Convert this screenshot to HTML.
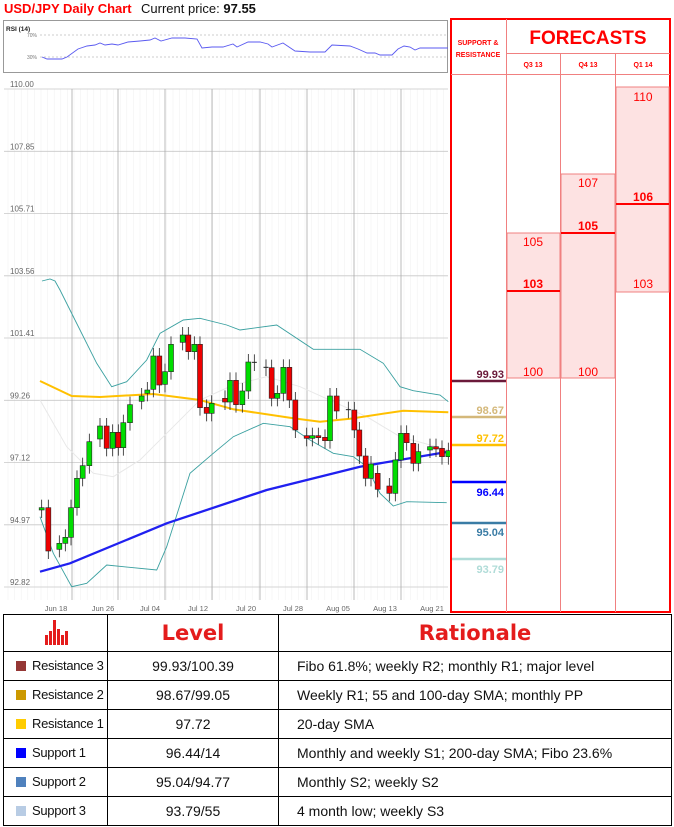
<!DOCTYPE html>
<html><head><meta charset="utf-8"><style>
*{margin:0;padding:0;box-sizing:border-box}
body{width:674px;height:827px;background:#fff;position:relative;overflow:hidden;font-family:"Liberation Sans",sans-serif}
.abs{position:absolute}
table{border-collapse:collapse;position:absolute;left:3px;top:614px;width:669px;table-layout:fixed}
td{border:1px solid #000;height:29px;font-size:14px;color:#111;white-space:nowrap;line-height:14px;padding:0;overflow:hidden}
td.c{text-align:center}
td.n{padding-left:12px;font-size:13px;letter-spacing:-0.3px}
td.r{padding-left:18px}
.sq{display:inline-block;width:10px;height:10px;margin-right:6px;vertical-align:-1px}
th{border:1px solid #000;height:37px;color:#e41c1c;font-size:21px;font-weight:bold;font-family:"DejaVu Sans","Liberation Sans",sans-serif;padding:0;line-height:20px}
</style></head><body>
<div class="abs" style="left:4px;top:1px;font-size:13px;font-weight:bold;color:#f00;white-space:nowrap">USD/JPY Daily Chart</div>
<div class="abs" style="left:141px;top:1px;font-size:13px;color:#111;white-space:nowrap">Current price: <b>97.55</b></div>

<svg class="abs" style="left:0;top:0" width="674" height="614" xmlns="http://www.w3.org/2000/svg" id="s">
<rect x="3.5" y="20.5" width="444" height="52" fill="#fff" stroke="#999"/>
<text x="6" y="31" font-size="6.5" font-weight="bold" fill="#222">RSI (14)</text>
<line x1="40" y1="35" x2="446" y2="35" stroke="#999" stroke-dasharray="2,2" stroke-width="0.6"/>
<line x1="40" y1="57" x2="446" y2="57" stroke="#999" stroke-dasharray="2,2" stroke-width="0.6"/>
<text x="27" y="37" font-size="5" fill="#777">70%</text>
<text x="27" y="59" font-size="5" fill="#777">30%</text>
<polyline fill="none" stroke="#5a5af0" stroke-width="0.9" points="42,57 47,59 62,59 67,57 78,49 87,46 95,45 100,43 105,45 112,44 118,45 128,42 140,41 150,40 155,38 161,41 172,38 185,38 197,39 202,48 212,47 223,47 233,44 237,47 248,42 260,42 268,44 272,47 283,43 295,51 310,52 325,52 332,45 350,46 358,49 367,53 375,53 380,55 392,55 398,49 404,46 410,47 415,50 420,48 435,48 448,48"/>
<rect x="4" y="89" width="444" height="512" fill="#fff"/>
<g id="g"></g>
<rect x="451" y="19" width="219" height="593" fill="none" stroke="#f00" stroke-width="2"/>
<g stroke="#f08080" stroke-width="1" fill="none">
<line x1="506.5" y1="19" x2="506.5" y2="612"/><line x1="560.5" y1="53" x2="560.5" y2="612"/><line x1="615.5" y1="53" x2="615.5" y2="612"/>
<line x1="506" y1="53.5" x2="670" y2="53.5"/><line x1="451" y1="74.5" x2="670" y2="74.5"/>
</g>
<rect x="507" y="233" width="53" height="145" fill="#fde2e2" stroke="#f08080"/>
<rect x="561" y="174" width="54" height="204" fill="#fde2e2" stroke="#f08080"/>
<rect x="616" y="87" width="53" height="205" fill="#fde2e2" stroke="#f08080"/>
<line x1="507" y1="291" x2="560" y2="291" stroke="#f00" stroke-width="2"/>
<line x1="561" y1="233" x2="615" y2="233" stroke="#f00" stroke-width="2"/>
<line x1="616" y1="204" x2="669" y2="204" stroke="#f00" stroke-width="2"/>
<g font-size="12" fill="#f00" text-anchor="middle">
<text x="533" y="246">105</text><text x="533" y="288" font-weight="bold">103</text><text x="533" y="376">100</text>
<text x="588" y="187">107</text><text x="588" y="230" font-weight="bold">105</text><text x="588" y="376">100</text>
<text x="643" y="101">110</text><text x="643" y="201" font-weight="bold">106</text><text x="643" y="288">103</text>
</g>
<text x="588" y="44" font-size="19" font-weight="bold" fill="#f00" text-anchor="middle">FORECASTS</text>
<text x="478" y="45" font-size="7" font-weight="bold" fill="#f00" text-anchor="middle">SUPPORT &amp;</text>
<text x="478" y="57" font-size="7" font-weight="bold" fill="#f00" text-anchor="middle">RESISTANCE</text>
<g font-size="7" font-weight="bold" fill="#f00" text-anchor="middle"><text x="533" y="67">Q3 13</text><text x="588" y="67">Q4 13</text><text x="643" y="67">Q1 14</text></g>
<g stroke-width="2.5">
<line x1="452" y1="381" x2="506" y2="381" stroke="#6b1a3a"/>
<line x1="452" y1="417" x2="506" y2="417" stroke="#d4b87a"/>
<line x1="452" y1="445" x2="506" y2="445" stroke="#ffc000"/>
<line x1="452" y1="482" x2="506" y2="482" stroke="#0000ff"/>
<line x1="452" y1="523" x2="506" y2="523" stroke="#3a7ca5"/>
<line x1="452" y1="559" x2="506" y2="559" stroke="#b0dcd8"/>
</g>
<g font-size="11" font-weight="bold" text-anchor="end">
<text x="504" y="378" fill="#6b1a3a">99.93</text>
<text x="504" y="414" fill="#d4b87a">98.67</text>
<text x="504" y="442" fill="#ffc000">97.72</text>
<text x="504" y="496" fill="#0000ff">96.44</text>
<text x="504" y="536" fill="#3a7ca5">95.04</text>
<text x="504" y="573" fill="#b0dcd8">93.79</text>
</g>
</svg>

<table>
<colgroup><col style="width:104px"><col style="width:171px"><col></colgroup>
<tr><th><svg width="24" height="26" viewBox="0 0 24 26"><g fill="#e41c1c"><rect x="1" y="16" width="3" height="10"/><rect x="5" y="12" width="3" height="14"/><rect x="9" y="1" width="3" height="25"/><rect x="13" y="10" width="3" height="16"/><rect x="17" y="16" width="3" height="10"/><rect x="21" y="12" width="3" height="14"/></g></svg></th><th>Level</th><th>Rationale</th></tr>
<tr><td class="n"><span class="sq" style="background:#953735"></span>Resistance 3</td><td class="c">99.93/100.39</td><td class="r">Fibo 61.8%; weekly R2; monthly R1; major level</td></tr>
<tr><td class="n"><span class="sq" style="background:#cc9900"></span>Resistance 2</td><td class="c">98.67/99.05</td><td class="r">Weekly R1; 55 and 100-day SMA; monthly PP</td></tr>
<tr><td class="n"><span class="sq" style="background:#ffcc00"></span>Resistance 1</td><td class="c">97.72</td><td class="r">20-day SMA</td></tr>
<tr><td class="n"><span class="sq" style="background:#0000ff"></span>Support 1</td><td class="c">96.44/14</td><td class="r">Monthly and weekly S1; 200-day SMA; Fibo 23.6%</td></tr>
<tr><td class="n"><span class="sq" style="background:#4f81bd"></span>Support 2</td><td class="c">95.04/94.77</td><td class="r">Monthly S2; weekly S2</td></tr>
<tr><td class="n"><span class="sq" style="background:#b8cce4"></span>Support 3</td><td class="c">93.79/55</td><td class="r">4 month low; weekly S3</td></tr>
</table>

<script>
var g=document.getElementById('g'),h='';
function Z(x,y){return [(x/3).toFixed(1),(320+y/3).toFixed(1)];}
for(var x=8;x<448;x+=6.6)h+='<line x1="'+x+'" y1="89" x2="'+x+'" y2="600" stroke="#f2f2f2" stroke-width="0.6"/>';
var ys=[89,151.3,213.5,275.8,338,400.3,462.5,524.8,587],lb=['110.00','107.85','105.71','103.56','101.41','99.26','97.12','94.97','92.82'];
for(var i=0;i<9;i++){h+='<line x1="4" y1="'+ys[i]+'" x2="448" y2="'+ys[i]+'" stroke="#c8c8c8" stroke-width="0.8"/>';h+='<text x="10" y="'+(ys[i]-2)+'" font-size="8" fill="#666">'+lb[i]+'</text>';}
var vx=[72,118,165,212,260,307,354,401];
vx.forEach(function(x){h+='<line x1="'+x+'" y1="89" x2="'+x+'" y2="600" stroke="#aaa" stroke-width="0.8"/>';});
var dl=[['Jun 18',56],['Jun 26',103],['Jul 04',150],['Jul 12',198],['Jul 20',246],['Jul 28',293],['Aug 05',338],['Aug 13',385],['Aug 21',432]];
dl.forEach(function(d){h+='<text x="'+d[1]+'" y="611" font-size="7.5" fill="#666" text-anchor="middle">'+d[0]+'</text>';});
function pl(pts,col,w,full){var s=pts.map(function(p){return full?p.join(','):Z(p[0],p[1]).join(',');}).join(' ');return '<polyline fill="none" stroke="'+col+'" stroke-width="'+w+'" points="'+s+'"/>';}
h+=pl([[120,240],[200,380],[280,460],[340,470],[420,420],[520,320],[600,240],[700,195],[800,170],[900,200],[1000,245],[1100,290],[1200,350],[1345,390]],'#e8e8e8',1);
h+=pl([[42,281],[50,279],[55,281],[60,290],[75,320]],'#3aa0a0',0.9,true);
h+=pl([[225,0],[290,130],[335,200],[380,185],[440,120],[480,40],[550,0],[600,-5],[680,15],[720,30],[830,15],[940,88],[1080,88],[1150,130],[1200,200],[1240,212],[1320,225],[1345,245]],'#3aa0a0',0.9);
h+=pl([[120,590],[160,700],[215,800],[260,790],[320,735],[370,740],[470,750],[500,680],[570,460],[640,400],[700,350],[790,310],[870,320],[930,360],[1000,400],[1060,410],[1100,440],[1140,520],[1180,558],[1220,545],[1340,548]],'#3aa0a0',0.9);
h+=pl([[120,183],[215,228],[300,231],[460,222],[600,240],[700,268],[880,295],[960,305],[1050,296],[1210,272],[1345,277]],'#ffc000',2);
h+=pl([[120,755],[210,730],[500,610],[800,510],[1080,440],[1345,395]],'#2020f0',2.3);
var c=[[125,563,570,'g'],[145,563,693,'r'],[178,670,688,'g'],[196,652,670,'g'],[213,563,652,'g'],[231,475,563,'g'],[248,437,475,'g'],[268,365,437,'g'],[300,318,357,'g'],[320,318,385,'r'],[338,337,385,'g'],[355,337,383,'r'],[370,308,383,'g'],[390,254,308,'g'],[425,228,244,'g'],[442,210,220,'g'],[460,108,208,'g'],[478,108,195,'r'],[495,155,193,'g'],[513,73,155,'g'],[548,45,67,'g'],[565,45,95,'r'],[583,73,95,'g'],[600,73,263,'r'],[620,262,280,'r'],[635,250,280,'g'],[675,235,246,'r'],[690,181,246,'g'],[708,181,254,'r'],[727,213,254,'g'],[745,126,213,'g'],[763,127,129,'k'],[798,142,144,'k'],[815,143,235,'r'],[832,220,235,'g'],[850,142,220,'g'],[868,142,240,'r'],[886,240,330,'r'],[920,347,355,'r'],[937,347,355,'g'],[955,347,350,'r'],[975,352,362,'r'],[990,228,362,'g'],[1010,228,273,'r'],[1045,269,271,'k'],[1063,270,330,'r'],[1078,330,408,'r'],[1097,408,475,'r'],[1113,432,475,'g'],[1133,460,508,'r'],[1168,498,520,'r'],[1186,420,520,'g'],[1203,340,420,'g'],[1220,340,368,'r'],[1240,370,430,'r'],[1255,395,430,'g'],[1290,380,390,'g'],[1308,380,387,'r'],[1326,385,410,'r'],[1345,392,410,'g']];
c.forEach(function(k){var x=k[0]/3,t=320+k[1]/3,b=320+k[2]/3;
h+='<line x1="'+x+'" y1="'+(t-8)+'" x2="'+x+'" y2="'+(b+8)+'" stroke="#222" stroke-width="0.8"/>';
if(k[3]=='k'){h+='<line x1="'+(x-2.5)+'" y1="'+t+'" x2="'+(x+2.5)+'" y2="'+t+'" stroke="#222"/>';}
else h+='<rect x="'+(x-2.5)+'" y="'+t+'" width="5" height="'+Math.max(b-t,2)+'" fill="'+(k[3]=='g'?'#00dd00':'#ee0000')+'" stroke="#222" stroke-width="0.6"/>';});
g.innerHTML=h;
</script>
</body></html>
